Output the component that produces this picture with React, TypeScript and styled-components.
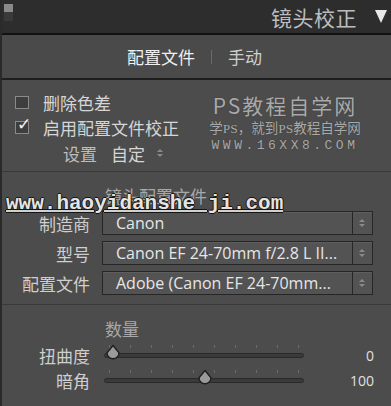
import styled, { createGlobalStyle } from "styled-components";

const Global = createGlobalStyle`
  html, body { margin: 0; padding: 0; background: #4c4c4c; }
  body { font-family: "Noto Sans CJK SC", "Noto Sans", sans-serif; }
`;

const Panel = styled.div`
  width: 391px;
  height: 406px;
  overflow: hidden;
  background: #4c4c4c;
  border-left: 2px solid #2a2a2a;
  box-sizing: border-box;
  color: #d6d6d6;
`;

const Header = styled.div`
  height: 33px;
  background: #2d2d2d;
  border-bottom: 2px solid #121212;
  display: flex;
  align-items: center;
  padding: 0 4px 0 2px;
`;

const Grip = styled.div`
  width: 9px;
  height: 17px;
  background: linear-gradient(#8a8a8a 0 45%, #3a3a3a 45%);
  margin-top: -8px;
`;

const Title = styled.div`
  margin-left: auto;
  font-size: 21px;
  color: #bdbdbd;
  letter-spacing: 0.5px;
`;

const Caret = styled.div`
  width: 0;
  height: 0;
  border-left: 6px solid transparent;
  border-right: 6px solid transparent;
  border-top: 13px solid #e8e8e8;
  margin-left: 18px;
`;

const Tabs = styled.div`
  height: 43px;
  background: #4a4a4a;
  border-bottom: 2px solid #1e1e1e;
  display: flex;
  align-items: center;
  justify-content: center;
  gap: 16px;
  padding-right: 4px;
  font-size: 17px;
`;

const Tab = styled.span<{ $active?: boolean }>`
  color: ${(p) => (p.$active ? "#f0f0f0" : "#cfcfcf")};
`;

const TabSep = styled.span`
  width: 1px;
  height: 14px;
  background: #6a6a6a;
`;

const Section = styled.div`
  position: relative;
  border-bottom: 1px solid #3a3a3a;
`;

const Options = styled(Section)`
  padding: 12px 0 10px 13px;
  display: flex;
  flex-direction: column;
  gap: 5px;
  height: 92px;
  box-sizing: border-box;
`;

const CheckRow = styled.div`
  display: flex;
  align-items: center;
  height: 20px;
  font-size: 17px;
  gap: 14px;
`;

const Box = styled.span`
  width: 12px;
  height: 11px;
  border: 1px solid #8a8a8a;
  background: #3e3e3e;
  position: relative;
  display: inline-block;
`;

const Tick = styled.span`
  position: absolute;
  left: 1px;
  top: -8px;
  font-size: 17px;
  color: #f2f2f2;
  font-family: "DejaVu Sans", sans-serif;
`;

const SetupRow = styled.div`
  display: flex;
  align-items: center;
  gap: 14px;
  padding-left: 48px;
  font-size: 17px;
  height: 22px;
`;

const Dim = styled.span`
  color: #bcbcbc;
`;

const Stepper = styled.span`
  display: inline-flex;
  flex-direction: column;
  gap: 2px;
  margin-left: -2px;
  &::before, &::after {
    content: "";
    display: block;
    border-left: 3px solid transparent;
    border-right: 3px solid transparent;
  }
  &::before { border-bottom: 3px solid #8a8a8a; }
  &::after { border-top: 3px solid #8a8a8a; }
`;

const Stamp = styled.div`
  position: absolute;
  left: 203px;
  top: 10px;
  width: 160px;
  display: flex;
  flex-direction: column;
  align-items: center;
  color: #a9a9a9;
  text-shadow: 0 0 1px #333;
`;

const StampBig = styled.div`
  font-size: 21px;
  line-height: 30px;
  letter-spacing: 2px;
  font-family: "Noto Sans CJK SC", sans-serif;
`;

const StampSmall = styled.div`
  font-size: 13.5px;
  line-height: 18px;
  font-family: "Liberation Serif", "Noto Sans CJK SC", serif;
`;

const StampUrl = styled.div`
  font-size: 13px;
  line-height: 16px;
  letter-spacing: 3.5px;
  font-family: "Liberation Mono", monospace;
`;

const Profile = styled(Section)`
  padding: 12px 0 0 0;
  height: 133px;
  box-sizing: border-box;
`;

const Heading = styled.div`
  padding-left: 103px;
  font-size: 17px;
  color: #a8a8a8;
  height: 24px;
  line-height: 24px;
`;

const AmountHeading = styled(Heading)`
  margin-bottom: 2px;
`;

const FieldRow = styled.div`
  display: grid;
  grid-template-columns: 88px 1fr;
  column-gap: 12px;
  align-items: center;
  height: 30px;
  padding-right: 18px;
`;

const Label = styled.div`
  text-align: right;
  font-size: 17px;
  color: #cfcfcf;
`;

const Select = styled.div`
  height: 22px;
  display: flex;
  border: 1px solid #262626;
  background: #535353;
  box-shadow: inset 0 1px 0 #5e5e5e;
`;

const SelectText = styled.div`
  flex: 1;
  padding-left: 13px;
  font-family: "Open Sans", "Noto Sans", sans-serif;
  font-size: 16px;
  line-height: 22px;
  color: #e6e6e6;
  white-space: nowrap;
  overflow: hidden;
`;

const SelectArrow = styled.div`
  width: 19px;
  border-left: 1px solid #262626;
  display: flex;
  align-items: center;
  justify-content: center;
`;

const UrlMark = styled.div`
  position: absolute;
  left: 4px;
  top: 20px;
  font-family: "Liberation Mono", monospace;
  font-weight: bold;
  font-size: 21px;
  color: #e4e4e4;
  text-decoration: underline;
  text-decoration-color: #d0d0d0;
  text-underline-offset: 1px;
  text-shadow: -1px 0 #151515, 1px 0 #151515, 0 -1px #151515, 0 1px #151515;
`;

const Amount = styled.div`
  padding: 12px 0 0 0;
`;

const SliderRow = styled.div`
  display: grid;
  grid-template-columns: 88px 200px 1fr;
  column-gap: 14px;
  align-items: center;
  height: 25px;
  padding-right: 17px;
`;

const Track = styled.div`
  position: relative;
  height: 5px;
  border-radius: 3px;
  background: #3a3a3a;
  border: 1px solid #2a2a2a;
  box-sizing: border-box;
`;

const Ticks = styled.div`
  position: absolute;
  left: 4px;
  right: 4px;
  top: -9px;
  display: flex;
  justify-content: space-between;
  & > span {
    width: 1px;
    height: 3px;
    background: #6a6a6a;
  }
`;

const Thumb = styled.svg`
  position: absolute;
  top: -10px;
`;

const Value = styled.div`
  text-align: right;
  font-family: "Open Sans", "Noto Sans", sans-serif;
  font-size: 14px;
  color: #e0e0e0;
`;

const fields = [
  { label: "制造商", value: "Canon" },
  { label: "型号", value: "Canon EF 24-70mm f/2.8 L II..." },
  { label: "配置文件", value: "Adobe (Canon EF 24-70mm..." },
];

const sliders = [
  { label: "扭曲度", pos: 0, value: "0" },
  { label: "暗角", pos: 0.5, value: "100" },
];

function Slider({ pos }: { pos: number }) {
  return (
    <Track>
      <Ticks>
        {Array.from({ length: 10 }).map((_, i) => (
          <span key={i} />
        ))}
      </Ticks>
      <Thumb width="16" height="16" viewBox="0 0 16 16" style={{ left: `${pos * 184}px` }}>
        <path d="M8 1.5 L14 8.8 A6 6 0 1 1 2 8.8 Z" fill="#9a9a9a" stroke="#1e1e1e" strokeWidth="1.4" />
      </Thumb>
    </Track>
  );
}

export default function App() {
  return (
    <>
      <Global />
      <Panel>
        <Header>
          <Grip />
          <Title>镜头校正</Title>
          <Caret />
        </Header>
        <Tabs>
          <Tab $active>配置文件</Tab>
          <TabSep />
          <Tab>手动</Tab>
        </Tabs>
        <Options>
          <CheckRow>
            <Box />
            <span>删除色差</span>
          </CheckRow>
          <CheckRow>
            <Box>
              <Tick>✓</Tick>
            </Box>
            <span>启用配置文件校正</span>
          </CheckRow>
          <SetupRow>
            <Dim>设置</Dim>
            <span>自定</span>
            <Stepper />
          </SetupRow>
          <Stamp>
            <StampBig>PS教程自学网</StampBig>
            <StampSmall>学PS，就到PS教程自学网</StampSmall>
            <StampUrl>WWW.16XX8.COM</StampUrl>
          </Stamp>
        </Options>
        <Profile>
          <Heading>镜头配置文件</Heading>
          {fields.map((f) => (
            <FieldRow key={f.label}>
              <Label>{f.label}</Label>
              <Select>
                <SelectText>{f.value}</SelectText>
                <SelectArrow>
                  <Stepper />
                </SelectArrow>
              </Select>
            </FieldRow>
          ))}
          <UrlMark>www.haoyidanshe ji.com</UrlMark>
        </Profile>
        <Amount>
          <AmountHeading>数量</AmountHeading>
          {sliders.map((s) => (
            <SliderRow key={s.label}>
              <Label>{s.label}</Label>
              <Slider pos={s.pos} />
              <Value>{s.value}</Value>
            </SliderRow>
          ))}
        </Amount>
      </Panel>
    </>
  );
}
